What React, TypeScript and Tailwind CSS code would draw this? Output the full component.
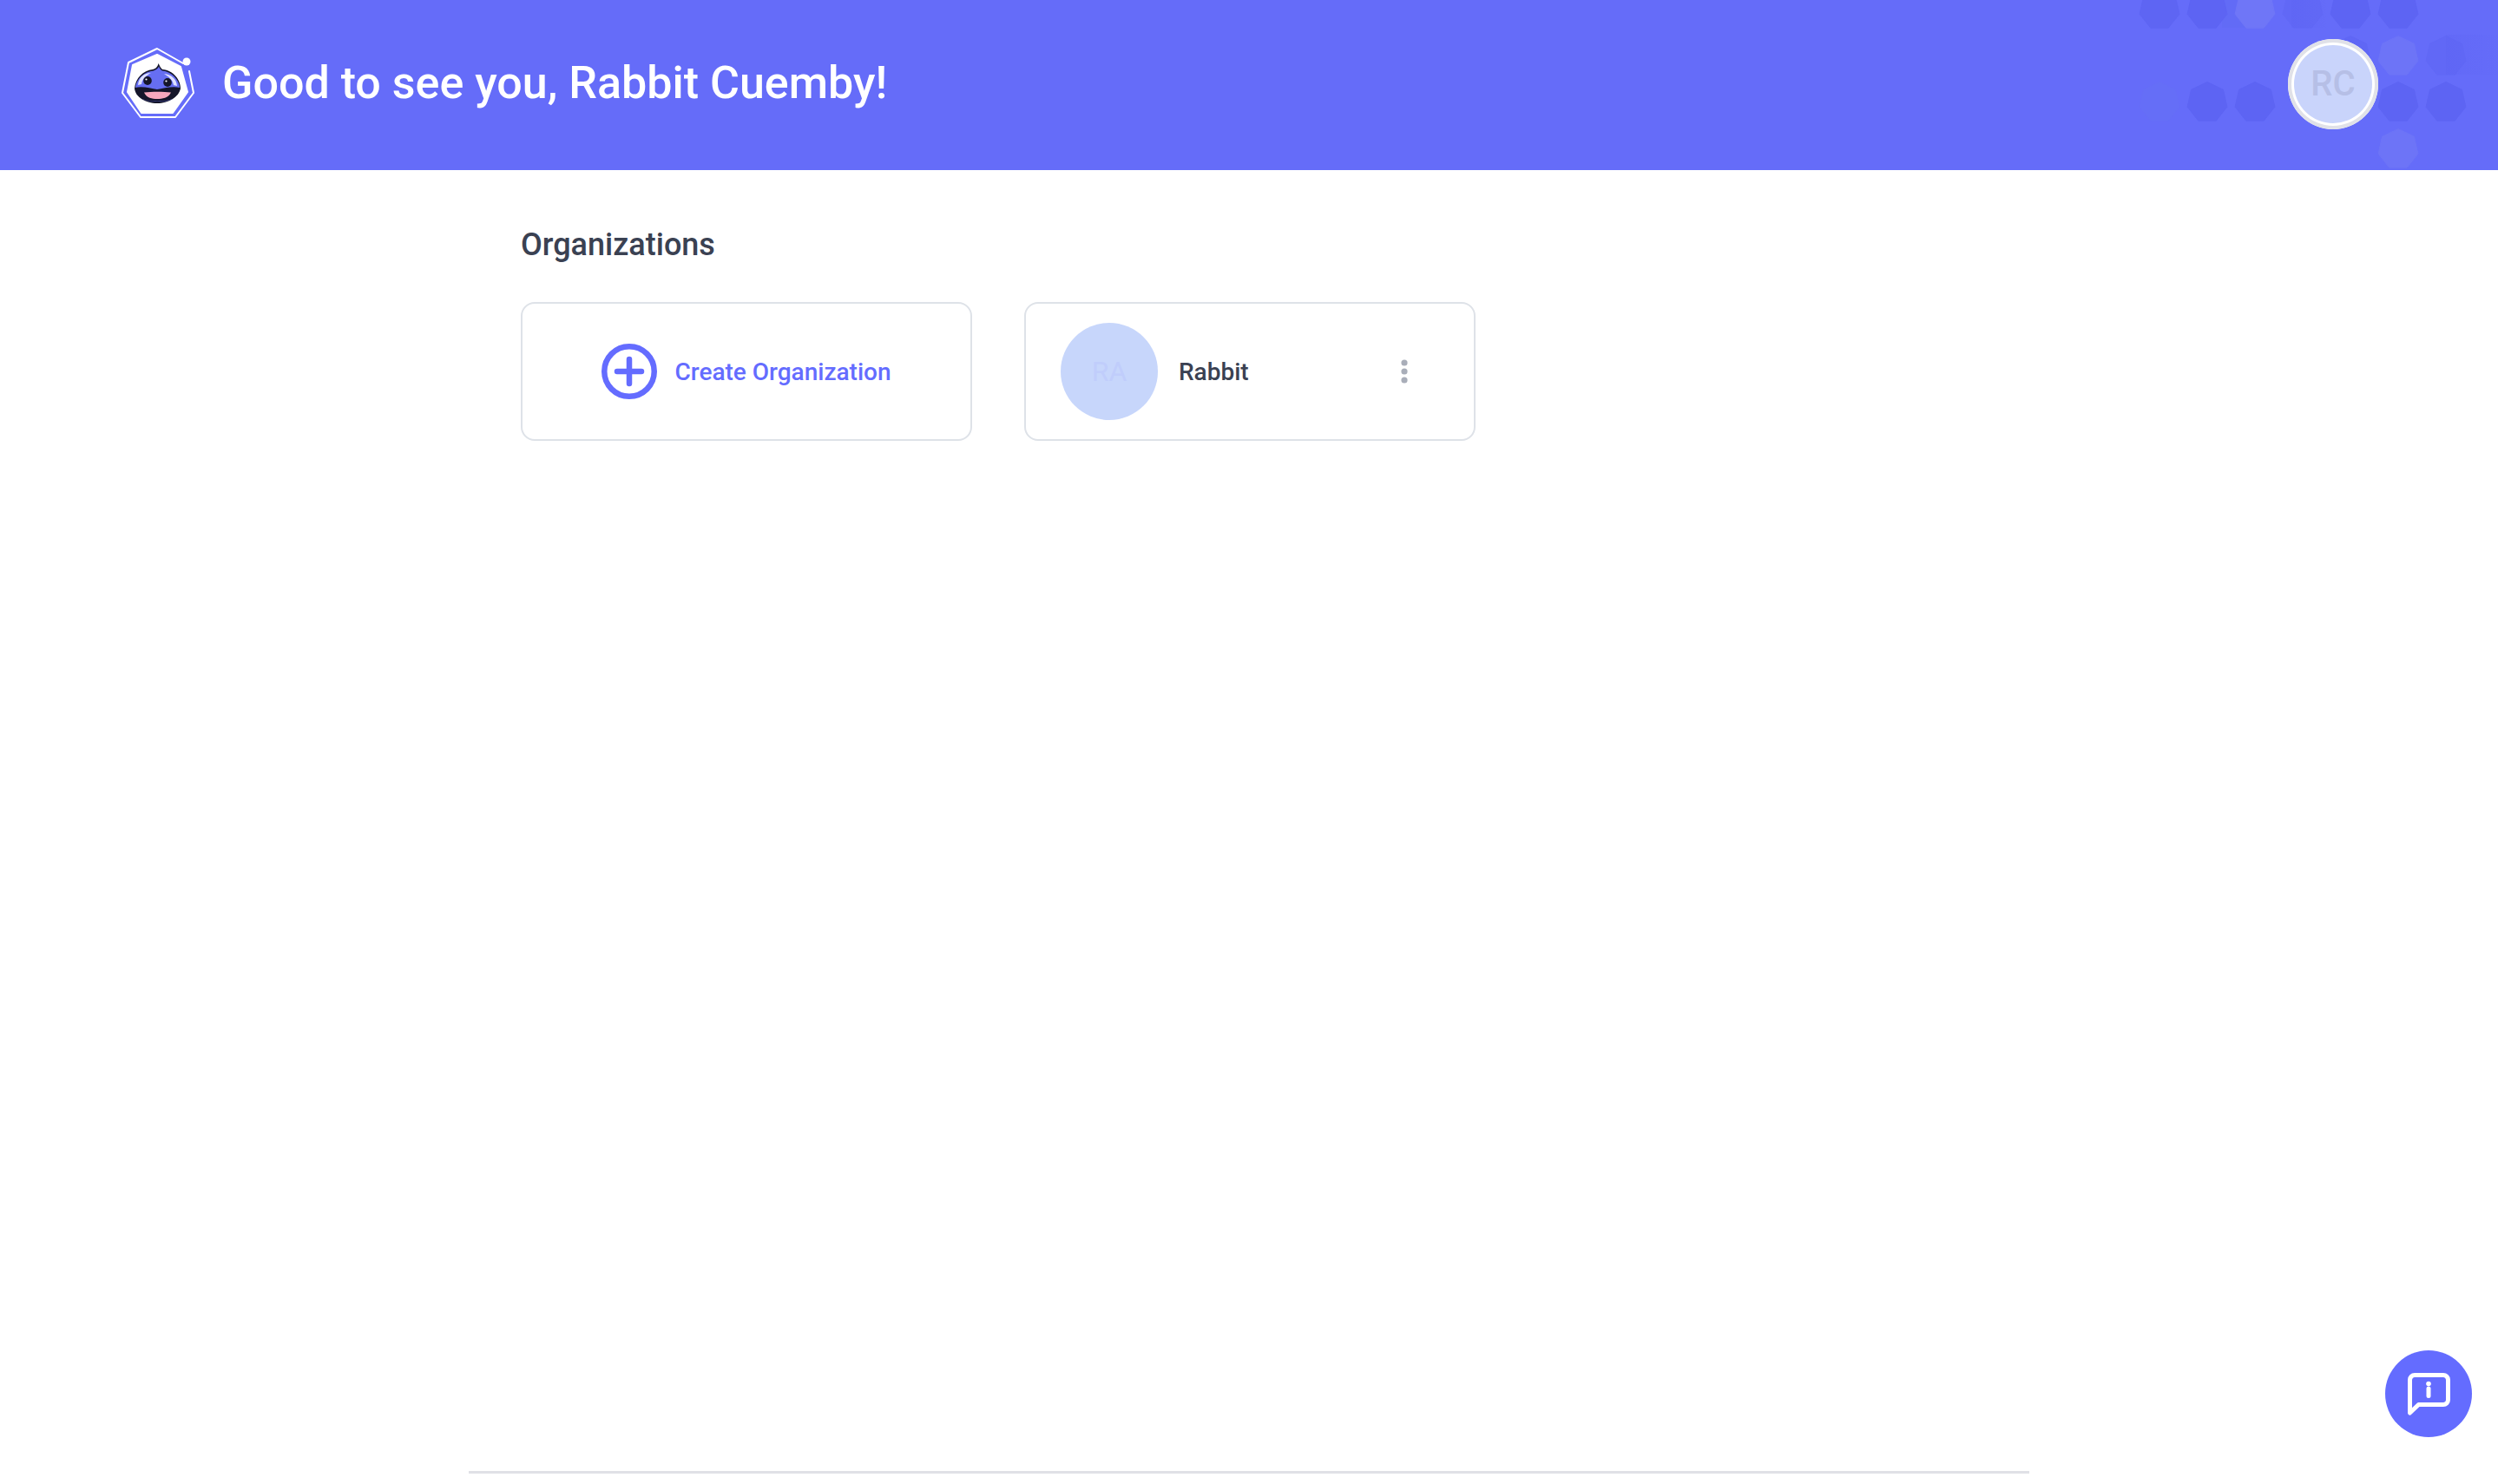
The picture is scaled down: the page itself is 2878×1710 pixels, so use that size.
import React from "react";

const hept = (cx: number, cy: number, r: number) =>
  Array.from({ length: 7 }, (_, i) => {
    const a = -Math.PI / 2 + (i * 2 * Math.PI) / 7;
    return `${(cx + r * Math.cos(a)).toFixed(1)},${(cy + r * Math.sin(a)).toFixed(1)}`;
  }).join(" ");

const DARK = "#5d64f3";
const LIGHT = "#6f76f7";
const cells: [number, number, string, number][] = [
  [48, 11, DARK, 0.85],
  [103, 11, DARK, 0.95],
  [158, 11, LIGHT, 1],
  [213, 11, DARK, 0.4],
  [268, 11, DARK, 1],
  [323, 11, DARK, 1],
  [268, 65, DARK, 0.6],
  [323, 65, LIGHT, 0.85],
  [378, 65, DARK, 0.45],
  [48, 118, "#6670f6", 0.5],
  [103, 118, DARK, 0.95],
  [158, 118, DARK, 0.95],
  [323, 118, DARK, 1],
  [378, 118, DARK, 1],
  [323, 172, LIGHT, 0.85],
];

function Pattern() {
  return (
    <svg className="absolute top-0 right-0" width="438" height="196" viewBox="0 0 438 196" aria-hidden="true">
      <defs>
        <linearGradient id="fa" x1="0" x2="1" y1="0" y2="0">
          <stop offset="0" stopColor="#5d64f3" stopOpacity="0.35" />
          <stop offset="1" stopColor="#5d64f3" stopOpacity="0.05" />
        </linearGradient>
      </defs>
      <rect x="120" y="0" width="40" height="32" fill="#5f6af4" opacity="0.5" />
      <rect x="200" y="0" width="40" height="32" fill="url(#fa)" />
      <rect x="378" y="40" width="60" height="46" fill="url(#fa)" />
      {cells.map(([x, y, c, o], i) => (
        <polygon key={i} points={hept(x, y, 23.5)} fill={c} opacity={o} strokeLinejoin="round" stroke={c} strokeWidth="1" />
      ))}
    </svg>
  );
}

function Logo() {
  return (
    <svg width="90" height="90" viewBox="17 21 90 90" className="shrink-0" aria-hidden="true">
      <path d="M91 43 L61 26 L28 42 L21 77 L42 105 L82 105 L103 77 L98 52" fill="none" stroke="#fff" strokeWidth="2" strokeLinejoin="round" strokeLinecap="round" />
      <circle cx="95" cy="41" r="4.5" fill="#fff" />
      <polygon points="61,33 88,47 96,76 79,100 43,100 27,76 33,45" fill="#fff" stroke="#fff" strokeWidth="2" strokeLinejoin="round" />
      <path d="M56 50 C60 49 62 46 62.5 43 C64 46 65 48 67 50 C80 51 88 62 88 72 C86 82 74 89 61 89 C48 89 36 82 35 72 C36 60 45 51 56 50 Z" fill="#15162a" />
      <path d="M57 51.5 C60 50 62 49 63 46.5 C64 49 65 50.5 67 51.5 C78 52.5 86.5 62 87 71 C78 69 68 72 61 73 C54 72 44 69 36 71 C37 61 46 52.5 57 51.5 Z" fill="#666ef2" />
      <path d="M39 68 C40 59 46 54 54 54 C50 56 44 60 43 67 Z" fill="#dfe2ff" />
      <path d="M84 69 C83 61 78 56 69 55 C74 58 79 62 80 68 Z" fill="#dfe2ff" />
      <ellipse cx="50" cy="63" rx="4.8" ry="5" fill="#15162a" />
      <ellipse cx="73" cy="65" rx="4.8" ry="5" fill="#15162a" />
      <circle cx="48.5" cy="61.5" r="1.1" fill="#fff" />
      <circle cx="71.5" cy="63.5" r="1.1" fill="#fff" />
      <path d="M46 76.5 C55 75.5 68 75.5 77 76.5 C74 83 67 84 61 84 C55 84 49 83 46 76.5 Z" fill="#f7a8bd" />
      <path d="M44 84 C52 87.5 70 87.5 79 84 C73 88 50 88 44 84 Z" fill="#666ef2" />
    </svg>
  );
}

function PlusIcon() {
  return (
    <svg width="64" height="64" viewBox="0 0 64 64" fill="none" stroke="#646cff" strokeWidth="6.5" strokeLinecap="round" className="shrink-0" aria-hidden="true">
      <circle cx="32" cy="32" r="28.75" />
      <path d="M18 32H46M32 18V46" />
    </svg>
  );
}

function Dots() {
  return (
    <svg width="8" height="28" viewBox="0 0 8 28" fill="#a9aeb9" aria-hidden="true">
      <circle cx="4" cy="4" r="3.6" />
      <circle cx="4" cy="14" r="3.6" />
      <circle cx="4" cy="24" r="3.6" />
    </svg>
  );
}

function InfoBubble() {
  return (
    <svg width="49" height="49" viewBox="0 0 49 49" fill="none" stroke="#fff" strokeWidth="5" strokeLinecap="round" strokeLinejoin="round" aria-hidden="true">
      <path d="M2.5 46V8a5.5 5.5 0 0 1 5.5-5.5h33a5.5 5.5 0 0 1 5.5 5.5v23a5.5 5.5 0 0 1-5.5 5.5H12.5Z" />
      <path d="M24 18v8.5" />
      <circle cx="24" cy="12.5" r="2.8" fill="#fff" stroke="none" />
    </svg>
  );
}

export default function App() {
  return (
    <div className="min-h-screen bg-white font-['Roboto',sans-serif]">
      <header className="relative flex h-[196px] items-center justify-between overflow-hidden bg-[#656cf9] pl-[137px] pr-[138px]">
        <Pattern />
        <div className="relative flex -translate-y-[2px] items-center gap-[29px]">
          <Logo />
          <h1 className="text-[52px] font-medium leading-none text-white">Good to see you, Rabbit Cuemby!</h1>
        </div>
        <div className="relative flex h-[104px] w-[104px] -translate-y-[1px] items-center justify-center rounded-full bg-white ring-4 ring-inset ring-[#e0e1e8]">
          <div className="flex h-[90px] w-[90px] items-center justify-center rounded-full bg-[#c9d4fb] text-[40px] font-medium text-[#b6bfe6]">
            RC
          </div>
        </div>
      </header>
      <main className="mx-auto flex h-[1502px] w-[1798px] flex-col border-b-[3px] border-[#e0e1e6] pl-[60px] pt-[65px]">
        <h2 className="text-[36px] font-medium leading-[42px] text-[#3a4152]">Organizations</h2>
        <div className="mt-[45px] flex gap-[60px]">
          <button className="flex h-[160px] w-[520px] items-center justify-center gap-[20px] rounded-[16px] border-2 border-[#dee2e8] bg-white">
            <PlusIcon />
            <span className="translate-y-[1px] text-[28px] font-medium text-[#646cff]">Create Organization</span>
          </button>
          <div className="flex h-[160px] w-[520px] items-center rounded-[16px] border-2 border-[#dee2e8] bg-white pl-[40px] pr-[76px]">
            <div className="flex h-[112px] w-[112px] shrink-0 items-center justify-center rounded-full bg-[#c7d6fb] text-[32px] text-[#c0cdfb]">
              RA
            </div>
            <span className="ml-[24px] flex-1 translate-y-[1px] text-[28px] font-medium text-[#3a4152]">Rabbit</span>
            <Dots />
          </div>
        </div>
      </main>
      <button className="fixed bottom-[54px] right-[30px] flex h-[100px] w-[100px] items-center justify-center rounded-full bg-[#646cff]">
        <InfoBubble />
      </button>
    </div>
  );
}
